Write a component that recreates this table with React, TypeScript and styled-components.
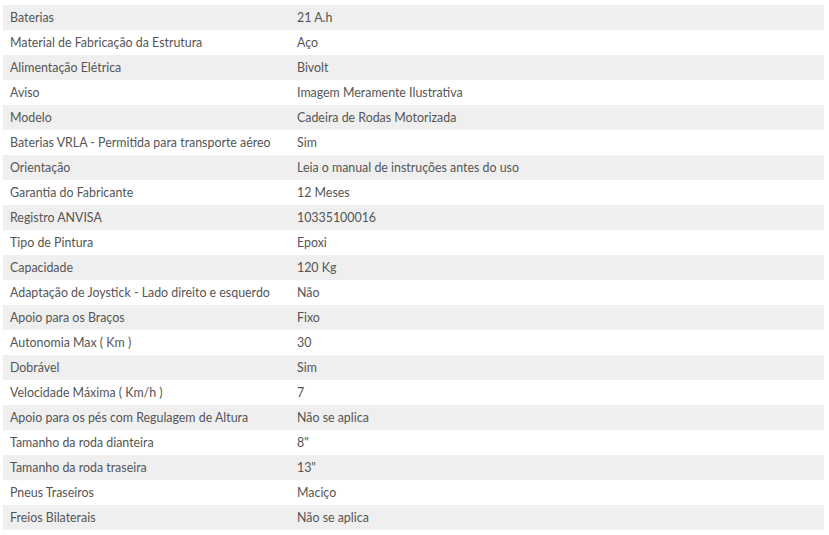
import { createGlobalStyle, styled } from 'styled-components';

interface Spec {
  label: string;
  value: string;
}

const specs: Spec[] = [
  { label: 'Baterias', value: '21 A.h' },
  { label: 'Material de Fabricação da Estrutura', value: 'Aço' },
  { label: 'Alimentação Elétrica', value: 'Bivolt' },
  { label: 'Aviso', value: 'Imagem Meramente Ilustrativa' },
  { label: 'Modelo', value: 'Cadeira de Rodas Motorizada' },
  { label: 'Baterias VRLA - Permitida para transporte aéreo', value: 'Sim' },
  { label: 'Orientação', value: 'Leia o manual de instruções antes do uso' },
  { label: 'Garantia do Fabricante', value: '12 Meses' },
  { label: 'Registro ANVISA', value: '10335100016' },
  { label: 'Tipo de Pintura', value: 'Epoxi' },
  { label: 'Capacidade', value: '120 Kg' },
  { label: 'Adaptação de Joystick - Lado direito e esquerdo', value: 'Não' },
  { label: 'Apoio para os Braços', value: 'Fixo' },
  { label: 'Autonomia Max ( Km )', value: '30' },
  { label: 'Dobrável', value: 'Sim' },
  { label: 'Velocidade Máxima ( Km/h )', value: '7' },
  { label: 'Apoio para os pés com Regulagem de Altura', value: 'Não se aplica' },
  { label: 'Tamanho da roda dianteira', value: '8"' },
  { label: 'Tamanho da roda traseira', value: '13"' },
  { label: 'Pneus Traseiros', value: 'Maciço' },
  { label: 'Freios Bilaterais', value: 'Não se aplica' },
];

const GlobalStyle = createGlobalStyle`
  body {
    margin: 0;
    background: #ffffff;
    font-family: Lato, 'Open Sans', Arial, sans-serif;
  }
`;

const Wrapper = styled.div`
  padding: 5px 5px 0 3px;
`;

const SpecTable = styled.table`
  width: 821px;
  border-collapse: collapse;
  table-layout: fixed;
`;

const SpecRow = styled.tr<{ $striped: boolean }>`
  height: 25px;
  background-color: ${(props) => (props.$striped ? '#efefef' : '#ffffff')};
`;

const LabelCell = styled.td`
  box-sizing: border-box;
  width: 287px;
  padding: 0 7px;
  font-size: 12.4px;
  color: #555555;
  white-space: nowrap;
`;

const ValueCell = styled.td`
  padding: 0 7px;
  font-size: 12.4px;
  color: #555555;
  white-space: nowrap;
`;

const App: React.FC = () => {
  return (
    <>
      <GlobalStyle />
      <Wrapper>
        <SpecTable>
          <tbody>
            {specs.map((spec, i) => (
              <SpecRow key={spec.label} $striped={i % 2 === 0}>
                <LabelCell>{spec.label}</LabelCell>
                <ValueCell>{spec.value}</ValueCell>
              </SpecRow>
            ))}
          </tbody>
        </SpecTable>
      </Wrapper>
    </>
  );
};

export default App;
